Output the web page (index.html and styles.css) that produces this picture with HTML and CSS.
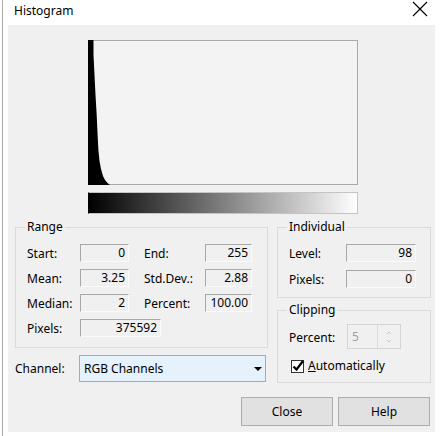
FILE: index.html
```html
<!DOCTYPE html>
<html>

<head>
    <title>Histogram</title>
    <link rel="stylesheet" href="styles.css">
</head>

<body>
    <div class="window">
        <div class="titlebar">
            <span class="title">Histogram</span>
            <svg class="close-x" width="16" height="16" viewBox="0 0 16 16">
                <path d="M1 1 L15 15 M15 1 L1 15" stroke="#000" stroke-width="1.2" fill="none" />
            </svg>
        </div>

        <div class="client">
            <!-- histogram plot -->
            <svg class="graph" width="270" height="145" viewBox="0 0 270 145">
                <rect x="0.5" y="0.5" width="269" height="144" fill="#f3f3f3" stroke="#a8a8a8" />
                <polygon fill="#000"
                    points="0,0 5.5,0 5.5,15 6.5,35 7.5,55 8.7,75 9.6,95 10.4,110 11.5,121 13,129 15,136 17,140 19.5,143 22,145 0,145" />
            </svg>
            <div class="ramp"></div>

            <div class="panels">
                <div class="left-col">
                    <fieldset class="group range">
                        <legend>Range</legend>
                        <div class="stats">
                            <span>Start:</span>
                            <span class="field">0</span>
                            <span class="label2">End:</span>
                            <span class="field">255</span>

                            <span>Mean:</span>
                            <span class="field">3.25</span>
                            <span class="label2">Std.Dev.:</span>
                            <span class="field">2.88</span>

                            <span>Median:</span>
                            <span class="field">2</span>
                            <span class="label2">Percent:</span>
                            <span class="field">100.00</span>

                            <span>Pixels:</span>
                            <span class="field wide">375592</span>
                        </div>
                    </fieldset>

                    <div class="channel-row">
                        <span class="channel-label">Channel:</span>
                        <div class="combo">
                            <span>RGB Channels</span>
                            <span class="arrow"></span>
                        </div>
                    </div>
                </div>

                <div class="right-col">
                    <fieldset class="group individual">
                        <legend>Individual</legend>
                        <div class="pairs">
                            <span>Level:</span>
                            <span class="field">98</span>
                            <span>Pixels:</span>
                            <span class="field">0</span>
                        </div>
                    </fieldset>

                    <fieldset class="group clipping">
                        <legend>Clipping</legend>
                        <div class="percent-row">
                            <span class="percent-label">Percent:</span>
                            <div class="spin">
                                <span class="spin-value">5</span>
                                <span class="spin-btns">
                                    <svg width="6" height="14" viewBox="0 0 6 14">
                                        <path d="M1 4 L3 2 L5 4 M1 10 L3 12 L5 10" stroke="#c4c4c4" fill="none" />
                                    </svg>
                                </span>
                            </div>
                        </div>
                        <label class="check-row">
                            <svg class="checkbox" width="14" height="14" viewBox="0 0 14 14">
                                <rect x="0.5" y="1.5" width="12" height="12" fill="#fff" stroke="#333" />
                                <path d="M2.5 7.5 L5.5 10.5 L12 2" stroke="#000" stroke-width="2.2" fill="none" />
                            </svg>
                            <span><u>A</u>utomatically</span>
                        </label>
                    </fieldset>
                </div>
            </div>

            <div class="buttons">
                <button class="btn">Close</button>
                <button class="btn">Help</button>
            </div>
        </div>
    </div>
</body>

</html>
```

FILE: styles.css
```css
body {
    margin: 0;
    background-color: #fff;
    font-family: "Noto Sans", sans-serif;
    font-size: 12px;
    color: #000;
    width: 440px;
    height: 436px;
    overflow: hidden;
}

.window {
    margin-left: 2px;
    border-left: 1px solid #a9a9a9;
    height: 436px;
    box-sizing: border-box;
}

.titlebar {
    height: 25px;
    display: flex;
    justify-content: space-between;
    align-items: flex-start;
    padding: 0 12px 0 11px;
    box-sizing: border-box;
}

.title {
    margin-top: 3px;
    line-height: 16px;
}

.close-x {
    margin-top: 1px;
}

.client {
    background-color: #f0f0f0;
    margin: 0 5px 0 5px;
    height: 407px;
    overflow: hidden;
}

.graph {
    display: block;
    margin: 15px 0 0 80px;
}

.ramp {
    margin: 7px 0 0 80px;
    width: 270px;
    height: 22px;
    box-sizing: border-box;
    border: 1px solid #c4c4c4;
    border-left-color: #000;
    background: linear-gradient(to right, #000, #fff);
}

.panels {
    display: flex;
    gap: 9px;
    margin: 5px 0 0 7px;
}

.group {
    margin: 0;
    border: 1px solid #dadada;
    padding: 0 0 0 11px;
    box-sizing: border-box;
}

.group legend {
    padding: 0 2px;
    margin-left: -2px;
    line-height: 16px;
}

.left-col {
    width: 253px;
}

.range {
    height: 129px;
    padding-top: 9px;
}

.stats {
    display: grid;
    grid-template-columns: 53px 49px 76px 47px;
    grid-auto-rows: 18px;
    row-gap: 7px;
    align-items: center;
}

.label2 {
    padding-left: 15px;
}

.field {
    height: 18px;
    box-sizing: border-box;
    border-top: 1px solid #a8a8a8;
    border-left: 1px solid #a8a8a8;
    border-right: 1px solid #fbfbfb;
    border-bottom: 1px solid #fbfbfb;
    text-align: right;
    padding-right: 3px;
    line-height: 16px;
}

.field.wide {
    grid-column: 2 / span 2;
    width: 81px;
}

.channel-row {
    display: flex;
    align-items: center;
    margin-top: 7px;
}

.channel-label {
    width: 64px;
}

.combo {
    width: 187px;
    height: 27px;
    box-sizing: border-box;
    border: 1px solid #7eb4ea;
    background-color: #e5f1fb;
    display: flex;
    align-items: center;
    justify-content: space-between;
    padding: 0 3px 0 4px;
}

.arrow {
    width: 0;
    height: 0;
    border-left: 4px solid transparent;
    border-right: 4px solid transparent;
    border-top: 4px solid #000;
}

.right-col {
    width: 154px;
    display: flex;
    flex-direction: column;
    gap: 4px;
}

.individual {
    height: 79px;
    padding-top: 9px;
}

.pairs {
    display: grid;
    grid-template-columns: 57px 70px;
    grid-auto-rows: 18px;
    row-gap: 8px;
    align-items: center;
}

.clipping {
    height: 81px;
    padding-top: 6px;
}

.percent-row {
    display: flex;
    align-items: center;
}

.percent-label {
    width: 58px;
    padding-top: 2px;
}

.spin {
    width: 54px;
    height: 25px;
    box-sizing: border-box;
    border: 1px solid #d4d4d4;
    display: flex;
}

.spin-value {
    width: 30px;
    padding-left: 4px;
    box-sizing: border-box;
    color: #a0a0a0;
    line-height: 23px;
    border-right: 1px solid #dcdcdc;
}

.spin-btns {
    flex: 1;
    display: flex;
    align-items: center;
    justify-content: center;
}

.check-row {
    display: flex;
    align-items: center;
    gap: 3px;
    margin: 8px 0 0 2px;
}

.checkbox {
    display: block;
}

.buttons {
    display: flex;
    justify-content: flex-end;
    gap: 5px;
    margin: 14px 5px 0 0;
}

.btn {
    width: 92px;
    height: 29px;
    background-color: #e1e1e1;
    border: 1px solid #adadad;
    font-family: "Noto Sans", sans-serif;
    font-size: 12px;
    color: #000;
    padding: 0;
}
```
